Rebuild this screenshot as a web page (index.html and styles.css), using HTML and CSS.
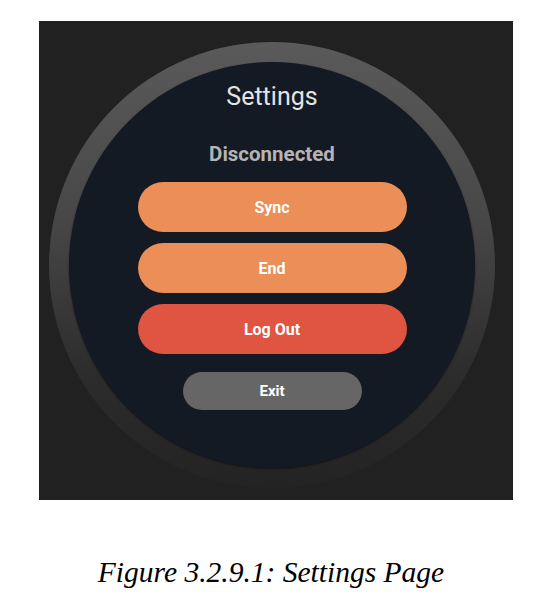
FILE: index.html
```html
<!DOCTYPE html>
<html lang="en">
<head>
    <meta charset="UTF-8">
    <meta name="viewport" content="width=device-width, initial-scale=1.0">
    <title>Settings Page</title>
    <link rel="stylesheet" href="styles.css">
</head>
<body>
    <div class="screen">
        <div class="bezel">
            <div class="face">
                <h1 class="title">Settings</h1>
                <div class="status">Disconnected</div>
                <button class="btn btn-orange">Sync</button>
                <button class="btn btn-orange">End</button>
                <button class="btn btn-red">Log Out</button>
                <button class="btn btn-exit">Exit</button>
            </div>
        </div>
    </div>
    <p class="caption">Figure 3.2.9.1: Settings Page</p>
</body>
</html>
```

FILE: styles.css
```css
body {
    margin: 0;
    background: #ffffff;
}
.screen {
    margin: 21px 0 0 39px;
    width: 474px;
    height: 479px;
    padding: 21px 0 0 10px;
    box-sizing: border-box;
    background: #212121;
}
.bezel {
    width: 446px;
    height: 446px;
    padding: 20px;
    box-sizing: border-box;
    border-radius: 50%;
    background: linear-gradient(to bottom, #5a5a5a 0%, #474747 40%, #2c2c2c 75%, #232323 100%);
}
.face {
    width: 406px;
    height: 406px;
    border-radius: 50%;
    background: #141a23;
    box-shadow: 0 1px 2px rgba(0, 0, 0, 0.5);
    display: flex;
    flex-direction: column;
    align-items: center;
    font-family: Roboto, "Liberation Sans", sans-serif;
}
.title {
    margin: 21px 0 0;
    font-size: 25px;
    line-height: 28px;
    font-weight: normal;
    color: #e4e4e4;
}
.status {
    margin-top: 31px;
    font-size: 20.5px;
    line-height: 24px;
    font-weight: bold;
    color: #b4b4b4;
}
.btn {
    border: none;
    border-radius: 25px;
    width: 269px;
    height: 50px;
    margin-top: 11px;
    color: #ffffff;
    font-family: inherit;
    font-size: 16px;
    font-weight: bold;
    padding: 0;
}
.btn-orange {
    background: #eb8e57;
}
.btn-orange:first-of-type {
    margin-top: 16px;
}
.btn-red {
    background: #e05442;
}
.btn-exit {
    background: #666666;
    width: 179px;
    height: 38px;
    border-radius: 19px;
    margin-top: 18px;
    font-size: 15px;
}
.caption {
    margin: 55px 0 0;
    text-align: center;
    font-family: "Liberation Serif", serif;
    font-style: italic;
    font-size: 29.5px;
    line-height: 34px;
    color: #000000;
}
```
